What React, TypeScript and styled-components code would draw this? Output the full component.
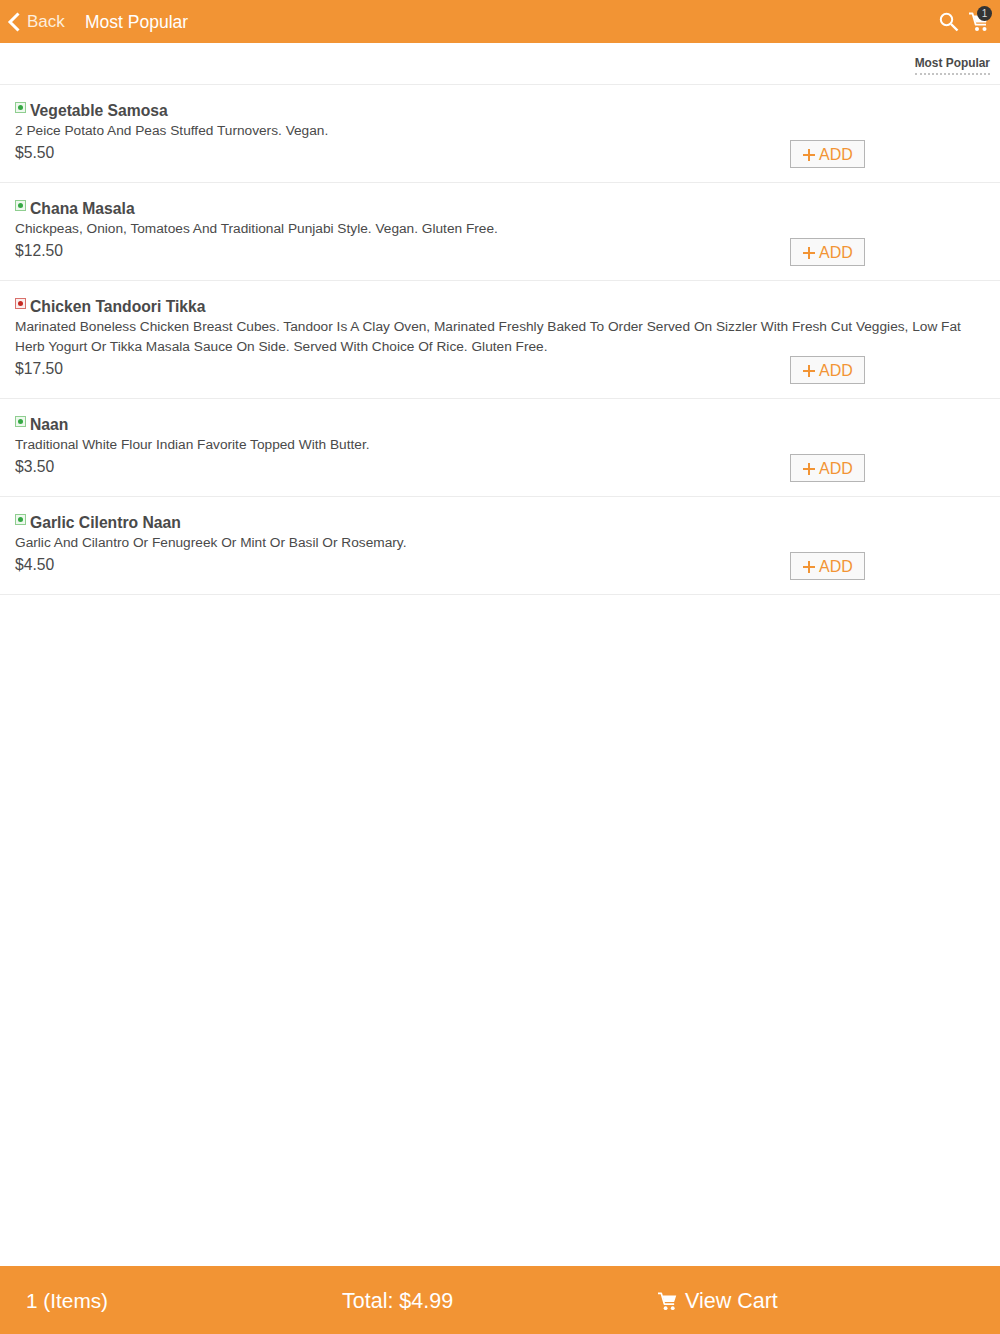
import React from "react";
import styled, { createGlobalStyle } from "styled-components";

type FoodType = "veg" | "nonveg";

interface MenuItem {
  name: string;
  description: string;
  price: string;
  type: FoodType;
}

const colors = {
  orange: "#f29434",
  text: "#4a4a4a",
  line: "#ececec",
};

const items: MenuItem[] = [
  {
    name: "Vegetable Samosa",
    description: "2 Peice Potato And Peas Stuffed Turnovers. Vegan.",
    price: "$5.50",
    type: "veg",
  },
  {
    name: "Chana Masala",
    description: "Chickpeas, Onion, Tomatoes And Traditional Punjabi Style. Vegan. Gluten Free.",
    price: "$12.50",
    type: "veg",
  },
  {
    name: "Chicken Tandoori Tikka",
    description:
      "Marinated Boneless Chicken Breast Cubes. Tandoor Is A Clay Oven, Marinated Freshly Baked To Order Served On Sizzler With Fresh Cut Veggies, Low Fat Herb Yogurt Or Tikka Masala Sauce On Side. Served With Choice Of Rice. Gluten Free.",
    price: "$17.50",
    type: "nonveg",
  },
  {
    name: "Naan",
    description: "Traditional White Flour Indian Favorite Topped With Butter.",
    price: "$3.50",
    type: "veg",
  },
  {
    name: "Garlic Cilentro Naan",
    description: "Garlic And Cilantro Or Fenugreek Or Mint Or Basil Or Rosemary.",
    price: "$4.50",
    type: "veg",
  },
];

const GlobalStyle = createGlobalStyle`
  html, body {
    margin: 0;
    padding: 0;
    background: #fff;
    font-family: "Liberation Sans", Arial, sans-serif;
  }
`;

const Page = styled.div`
  height: 1334px;
  display: flex;
  flex-direction: column;
  overflow: hidden;
`;

const TopBar = styled.header`
  height: 43px;
  flex: none;
  display: flex;
  align-items: center;
  background: ${colors.orange};
  color: #fff;
`;

const BackLink = styled.div`
  display: flex;
  align-items: center;
  margin-left: 7px;
  width: 78px;
  font-size: 17px;
  padding-top: 1px;
  color: #fdeedd;
  svg {
    margin: -1px 6px 0 0;
  }
`;

const Title = styled.div`
  flex: 1;
  font-size: 17.5px;
  padding-top: 1px;
`;

const TopIcons = styled.div`
  display: flex;
  align-items: center;
  gap: 10px;
  margin-right: 11px;
`;

const CartWrap = styled.div`
  position: relative;
  width: 20px;
  height: 20px;
`;

const Badge = styled.span`
  position: absolute;
  top: -6px;
  right: -3px;
  width: 15px;
  height: 15px;
  border-radius: 50%;
  background: #333;
  color: #ddd;
  font-size: 10px;
  line-height: 15px;
  text-align: center;
`;

const FilterBar = styled.div`
  height: 41px;
  flex: none;
  display: flex;
  justify-content: flex-end;
  border-bottom: 1px solid ${colors.line};
`;

const FilterTab = styled.div`
  height: 32px;
  margin: 0 10px 0 0;
  box-sizing: border-box;
  padding-top: 13px;
  font-size: 11.9px;
  line-height: 15px;
  font-weight: 700;
  color: ${colors.text};
  border-bottom: 2px dotted #c4c4c4;
`;

const List = styled.main`
  flex: 1;
`;

const Row = styled.article`
  padding: 15px 15px 14px;
  border-bottom: 1px solid ${colors.line};
`;

const NameLine = styled.div`
  display: flex;
  align-items: center;
  height: 21px;
`;

const Marker = styled.span<{ $type: FoodType }>`
  width: 11px;
  height: 11px;
  flex: none;
  box-sizing: border-box;
  margin: -7px 4px 0 0;
  display: flex;
  align-items: center;
  justify-content: center;
  border: 1.5px solid ${(p) => (p.$type === "veg" ? "#8fce90" : "#d9706a")};
  background: ${(p) => (p.$type === "veg" ? "#eef8ee" : "#fbeeee")};
  &::after {
    content: "";
    width: 5px;
    height: 5px;
    border-radius: 50%;
    background: ${(p) => (p.$type === "veg" ? "#35a844" : "#c62a22")};
  }
`;

const Name = styled.h3`
  margin: 0;
  font-size: 15.7px;
  font-weight: 700;
  color: ${colors.text};
`;

const Description = styled.p`
  margin: 0;
  font-size: 13.7px;
  line-height: 20px;
  color: ${colors.text};
`;

const BuyLine = styled.div`
  display: flex;
  justify-content: space-between;
  align-items: flex-start;
  margin-top: -1px;
  padding-right: 120px;
`;

const Price = styled.div`
  padding-top: 1px;
  font-size: 15.7px;
  line-height: 24px;
  color: ${colors.text};
`;

const AddButton = styled.button`
  width: 75px;
  height: 28px;
  padding: 1px 0 0;
  display: flex;
  align-items: center;
  justify-content: center;
  gap: 3px;
  box-sizing: border-box;
  border: 1px solid #b5b5b5;
  border-radius: 0;
  background: #f9f9f9;
  color: ${colors.orange};
  font-family: inherit;
  font-size: 16px;
`;

const Footer = styled.footer`
  height: 68px;
  flex: none;
  display: grid;
  grid-template-columns: repeat(3, 316px);
  align-items: center;
  padding: 2px 0 0 26px;
  box-sizing: border-box;
  background: ${colors.orange};
  color: #fff;
  font-size: 21.5px;
`;

const ItemCount = styled.div`
  font-size: 20.8px;
`;

const ViewCart = styled.div`
  display: flex;
  align-items: center;
  gap: 8px;
`;

const CartIcon = ({ size }: { size: number }) => (
  <svg width={size} height={size} viewBox="0 0 20 20" fill="none">
    <path d="M0 1.5h3.5l3.2 11.2h10.3" stroke="#fff" strokeWidth="1.8" strokeLinejoin="round" />
    <path d="M4.6 3.6h14.6l-2.2 7H6.6z" fill="#fff" />
    <circle cx="8" cy="17" r="2" fill="#fff" />
    <circle cx="15.5" cy="17" r="2" fill="#fff" />
  </svg>
);

const App = () => {
  return (
    <Page>
      <GlobalStyle />
      <TopBar>
        <BackLink>
          <svg width="14" height="20" viewBox="0 0 14 20" fill="none">
            <path d="M11.5 1.5 3 10l8.5 8.5" stroke="#fff" strokeWidth="3" />
          </svg>
          Back
        </BackLink>
        <Title>Most Popular</Title>
        <TopIcons>
          <svg width="20" height="20" viewBox="0 0 20 20" fill="none">
            <circle cx="7.5" cy="7.5" r="5.7" stroke="#fff" strokeWidth="2" />
            <path d="m12 12 6.5 6.5" stroke="#fff" strokeWidth="2.4" />
          </svg>
          <CartWrap>
            <CartIcon size={20} />
            <Badge>1</Badge>
          </CartWrap>
        </TopIcons>
      </TopBar>
      <FilterBar>
        <FilterTab>Most Popular</FilterTab>
      </FilterBar>
      <List>
        {items.map((item) => (
          <Row key={item.name}>
            <NameLine>
              <Marker $type={item.type} />
              <Name>{item.name}</Name>
            </NameLine>
            <Description>{item.description}</Description>
            <BuyLine>
              <Price>{item.price}</Price>
              <AddButton>
                <svg width="14" height="14" viewBox="0 0 14 14" fill="none">
                  <path d="M7 1v12M1 7h12" stroke={colors.orange} strokeWidth="2" />
                </svg>
                ADD
              </AddButton>
            </BuyLine>
          </Row>
        ))}
      </List>
      <Footer>
        <ItemCount>1 (Items)</ItemCount>
        <div>Total: $4.99</div>
        <ViewCart>
          <CartIcon size={19} />
          View Cart
        </ViewCart>
      </Footer>
    </Page>
  );
};

export default App;
